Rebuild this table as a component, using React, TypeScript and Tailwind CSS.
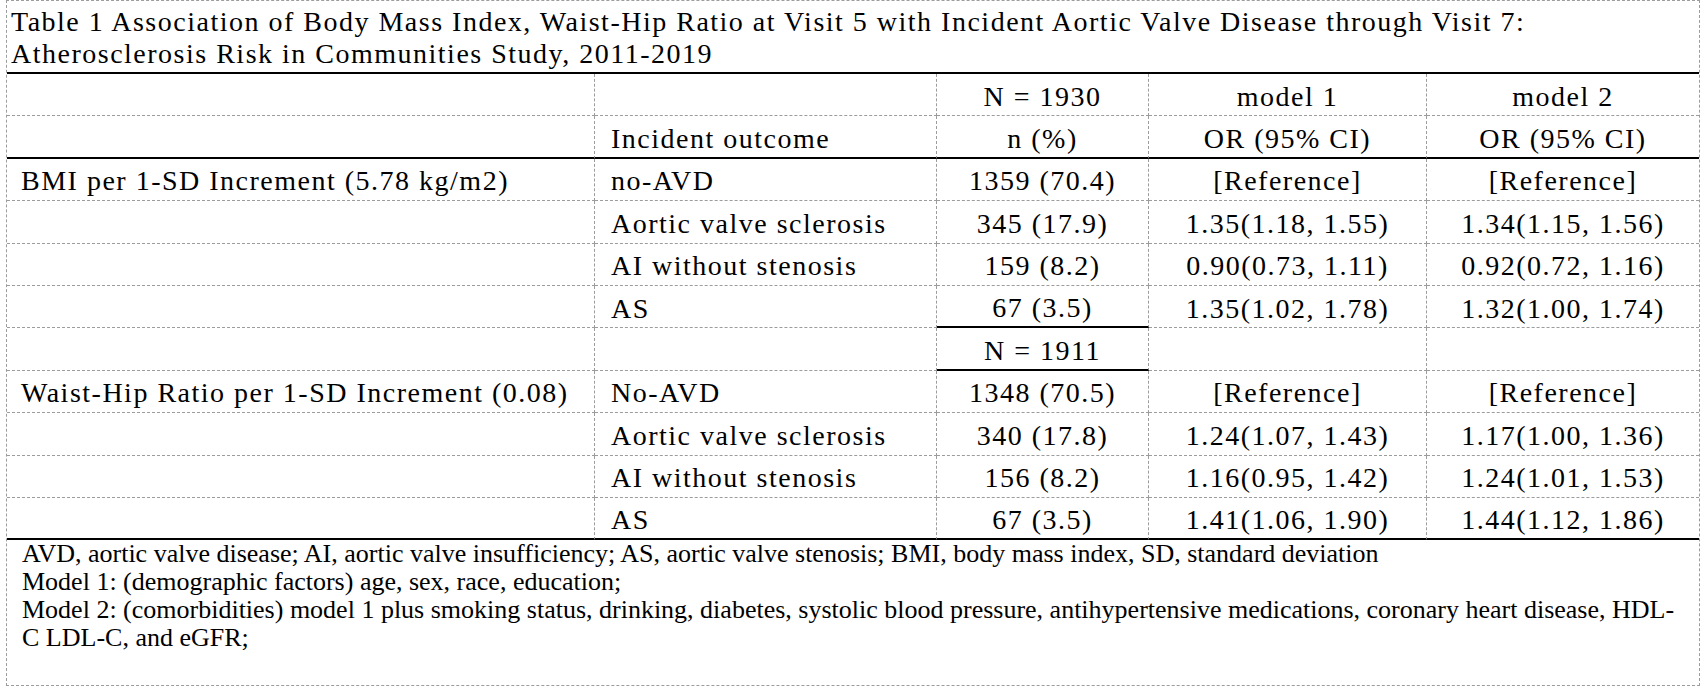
import React from "react";

type Row = {
  label?: string;
  outcome?: string;
  n: string;
  m1?: string;
  m2?: string;
  thickN?: boolean;
  last?: boolean;
};

const header: Row[] = [
  { n: "N = 1930", m1: "model 1", m2: "model 2" },
  { outcome: "Incident outcome", n: "n (%)", m1: "OR (95% CI)", m2: "OR (95% CI)", last: true },
];

const rows: Row[] = [
  { label: "BMI per 1-SD Increment (5.78 kg/m2)", outcome: "no-AVD", n: "1359 (70.4)", m1: "[Reference]", m2: "[Reference]" },
  { outcome: "Aortic valve sclerosis", n: "345 (17.9)", m1: "1.35(1.18, 1.55)", m2: "1.34(1.15, 1.56)" },
  { outcome: "AI without stenosis", n: "159 (8.2)", m1: "0.90(0.73, 1.11)", m2: "0.92(0.72, 1.16)" },
  { outcome: "AS", n: "67 (3.5)", m1: "1.35(1.02, 1.78)", m2: "1.32(1.00, 1.74)", thickN: true },
  { n: "N = 1911", thickN: true },
  { label: "Waist-Hip Ratio per 1-SD Increment (0.08)", outcome: "No-AVD", n: "1348 (70.5)", m1: "[Reference]", m2: "[Reference]" },
  { outcome: "Aortic valve sclerosis", n: "340 (17.8)", m1: "1.24(1.07, 1.43)", m2: "1.17(1.00, 1.36)" },
  { outcome: "AI without stenosis", n: "156 (8.2)", m1: "1.16(0.95, 1.42)", m2: "1.24(1.01, 1.53)" },
  { outcome: "AS", n: "67 (3.5)", m1: "1.41(1.06, 1.90)", m2: "1.44(1.12, 1.86)", last: true },
];

const dashB = "border-b border-b-[#9c9c9c]";
const thickB = "border-b-2 border-b-black [border-bottom-style:solid]";
const cell = "flex h-[42.4px] items-center pt-[4px] border-r border-r-[#9c9c9c] border-dashed whitespace-nowrap";

function TableRow({ r }: { r: Row }) {
  const b = r.last ? thickB : dashB;
  return (
    <>
      <div className={`${cell} ${b} pl-[14px]`}>{r.label}</div>
      <div className={`${cell} ${b} pl-[16px]`}>{r.outcome}</div>
      <div className={`${cell} ${r.last || r.thickN ? thickB : dashB} justify-center`}>{r.n}</div>
      <div className={`${cell} ${b} justify-center`}>{r.m1}</div>
      <div className={`flex h-[42.4px] items-center justify-center pt-[4px] border-dashed whitespace-nowrap ${b}`}>
        {r.m2}
      </div>
    </>
  );
}

export default function App() {
  return (
    <div className="h-[692px] w-[1704px] bg-white pl-[6px] text-black font-['Liberation_Serif','Times_New_Roman',serif]">
      <div className="w-[1694px] border border-dashed border-[#9c9c9c]">
        <div className="grid grid-cols-[588px_342px_212px_278px_272px] text-[28px] leading-[28px] tracking-[1.5px]">
          <div className={`col-span-5 h-[73px] pl-[4px] pt-[5px] leading-[32px] ${thickB}`}>
            Table 1 Association of Body Mass Index, Waist-Hip Ratio at Visit 5 with Incident Aortic Valve Disease through Visit 7:
            <br />
            Atherosclerosis Risk in Communities Study, 2011-2019
          </div>
          {header.map((r, i) => (
            <TableRow key={`h${i}`} r={r} />
          ))}
          {rows.map((r, i) => (
            <TableRow key={i} r={r} />
          ))}
          <div className="col-span-5 h-[145px] pl-[15px] text-[26px] leading-[28px] tracking-normal">
            <p className="whitespace-nowrap">
              AVD, aortic valve disease; AI, aortic valve insufficiency; AS, aortic valve stenosis; BMI, body mass index, SD, standard deviation
            </p>
            <p className="whitespace-nowrap">Model 1: (demographic factors) age, sex, race, education;</p>
            <p className="whitespace-nowrap">
              Model 2: (comorbidities) model 1 plus smoking status, drinking, diabetes, systolic blood pressure, antihypertensive medications, coronary heart disease, HDL-
            </p>
            <p className="whitespace-nowrap">C LDL-C, and eGFR;</p>
          </div>
        </div>
      </div>
    </div>
  );
}
